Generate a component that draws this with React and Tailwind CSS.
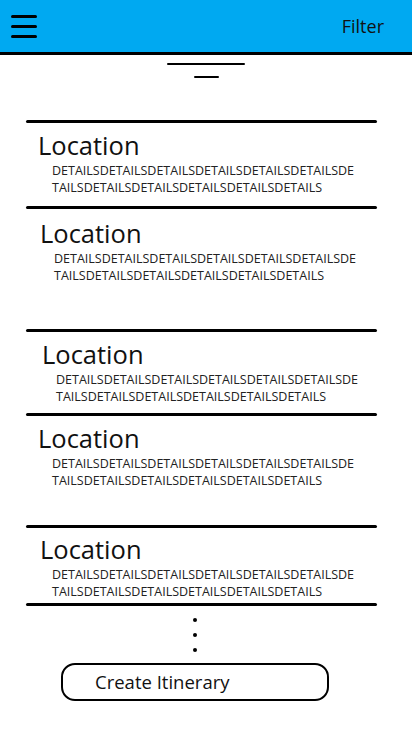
import React from 'react';

const DETAILS_A = 'DETAILSDETAILSDETAILSDETAILSDETAILSDETAILSDE';
const DETAILS_B = 'TAILSDETAILSDETAILSDETAILSDETAILSDETAILS';

const cards = [
    { box: 'h-[83px] pt-[7px]', title: 'pl-[38px]', details: 'pl-[52px]' },
    { box: 'h-[120px] pt-[9px]', title: 'pl-[40px]', details: 'pl-[54px]' },
    { box: 'h-[81px] pt-[7px]', title: 'pl-[42px]', details: 'pl-[56px]' },
    { box: 'h-[109px] pt-[7px]', title: 'pl-[38px]', details: 'pl-[52px]' },
    { box: 'h-[75px] pt-[6px]', title: 'pl-[40px]', details: 'pl-[52px]' },
];

const Divider = () => <div className="ml-[26px] w-[351px] h-[3px] rounded-full bg-black" />;

const LocationCard = ({ box, title, details }) => (
    <div className={box}>
        <p className={`${title} text-[25.5px] leading-[30px] text-[#111]`}>Location</p>
        <div className={`${details} mt-[2px] text-[12.5px] leading-[17px] text-[#222]`}>
            <p>{DETAILS_A}</p>
            <p>{DETAILS_B}</p>
        </div>
    </div>
);

export default function App() {
    return (
        <div className="w-[412px] h-[732px] bg-white overflow-hidden" style={{ fontFamily: '"Open Sans", "Noto Sans", sans-serif' }}>
            {/* Top bar */}
            <div className="h-[52px] bg-[#00a9f1] flex items-center justify-between pl-[11px] pr-[28px]">
                <div className="flex flex-col gap-[7px] w-[26px]">
                    <span className="h-[3px] rounded-full bg-black" />
                    <span className="h-[3px] rounded-full bg-black" />
                    <span className="h-[3px] rounded-full bg-black" />
                </div>
                <span className="text-[18px] text-[#111]">Filter</span>
            </div>
            <div className="h-[3px] bg-black" />

            {/* Drag handle */}
            <div className="flex flex-col items-center mt-[8px] gap-[11px]">
                <div className="w-[78px] h-[2px] bg-black rounded-full" />
                <div className="w-[25px] h-[2px] bg-black rounded-full" />
            </div>

            <div className="mt-[42px]">
                {cards.map((c, i) => (
                    <React.Fragment key={i}>
                        <Divider />
                        <LocationCard {...c} />
                    </React.Fragment>
                ))}
                <Divider />
            </div>

            {/* More */}
            <div className="flex flex-col gap-[11px] mt-[12px] ml-[193px]">
                <span className="w-[4px] h-[4px] rounded-full bg-black" />
                <span className="w-[4px] h-[4px] rounded-full bg-black" />
                <span className="w-[4px] h-[4px] rounded-full bg-black" />
            </div>

            <button className="mt-[11px] ml-[61px] w-[268px] h-[38px] rounded-[14px] border-2 border-black flex items-center pl-[32px] text-[18.5px] text-[#111]">
                Create Itinerary
            </button>
        </div>
    );
}
